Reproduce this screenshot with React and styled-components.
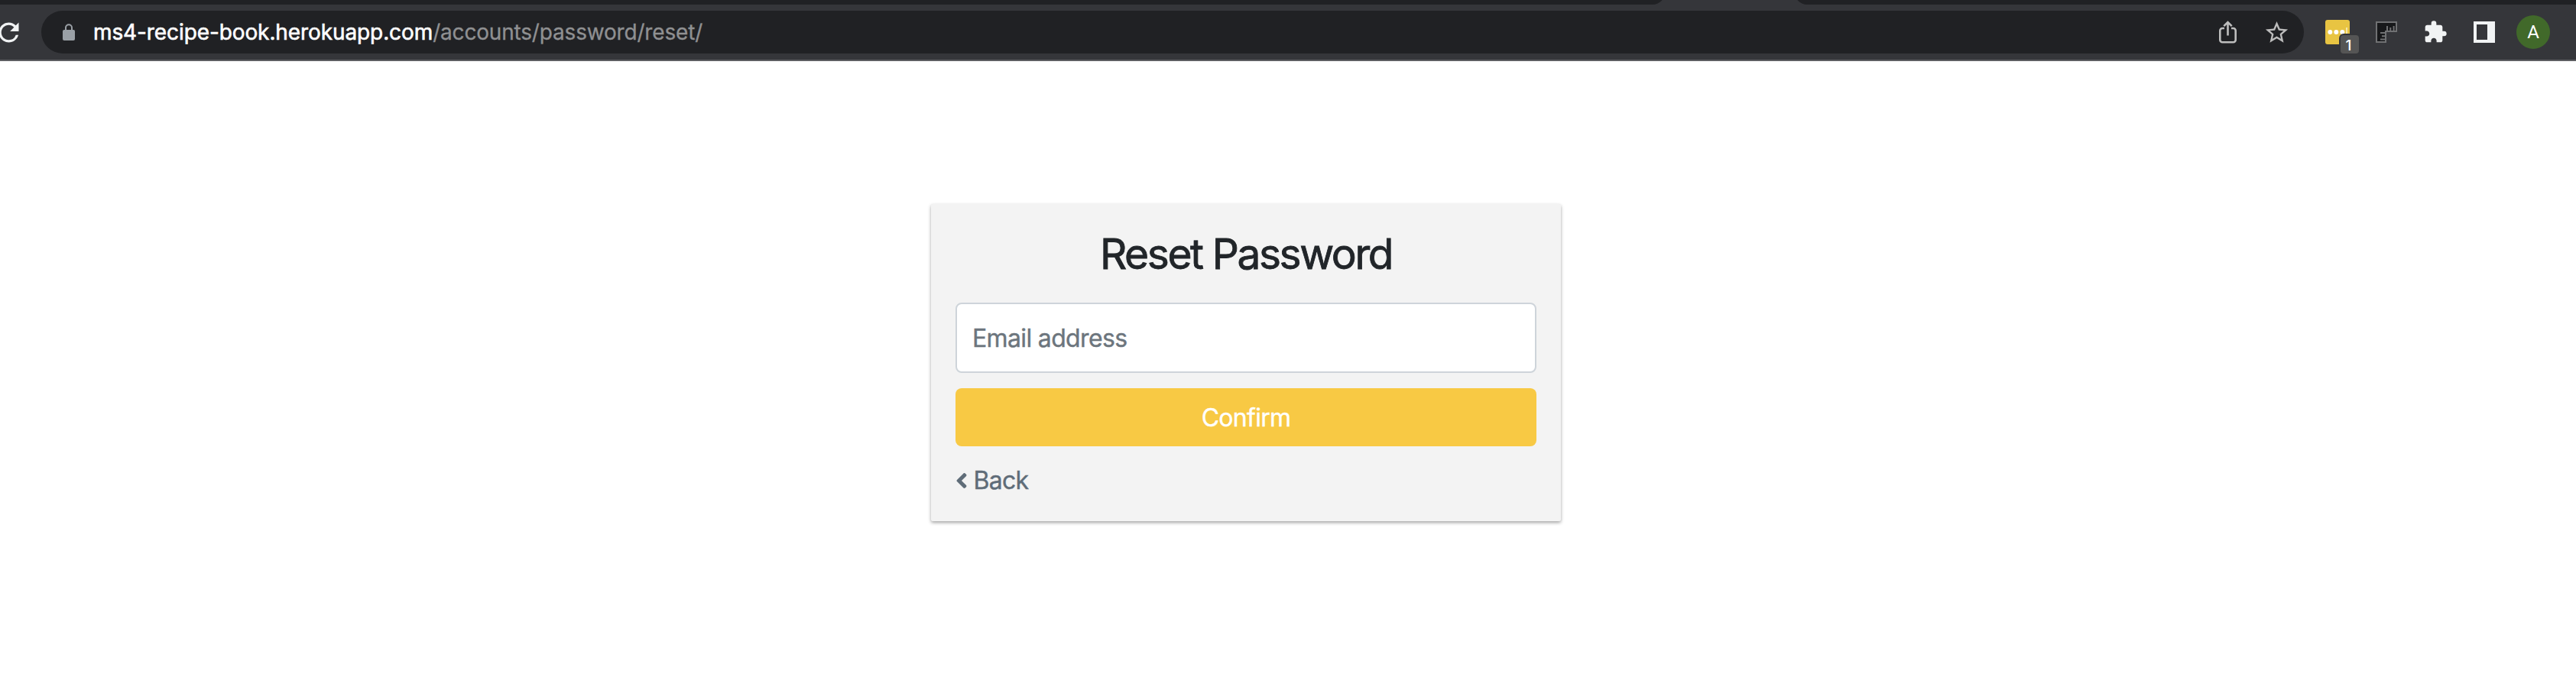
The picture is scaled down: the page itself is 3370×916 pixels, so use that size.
import React from 'react';
import styled, { createGlobalStyle } from 'styled-components';
import { MdExtension, MdRefresh, MdStarBorder } from 'react-icons/md';
import { FaAngleLeft } from 'react-icons/fa';

const GlobalStyle = createGlobalStyle`
  *, *::before, *::after { box-sizing: border-box; }
  body {
    margin: 0;
    background: #fff;
    font-family: Inter, "Liberation Sans", sans-serif;
  }
`;

const Page = styled.div`
  display: flex;
  flex-direction: column;
  min-height: 916px;
  overflow: hidden;
`;

/* Browser chrome */

const TabStrip = styled.div`
  display: flex;
  align-items: flex-end;
  justify-content: space-between;
  height: 6px;
  overflow: hidden;
  background: #35363a;
`;

const TabGap = styled.div`
  flex: none;
  width: ${(p) => p.$width}px;
  height: 20px;
  background: #202124;
  border-radius: ${(p) => (p.$side === 'left' ? '0 0 16px 0' : '0 0 0 16px')};
`;

const Toolbar = styled.header`
  display: flex;
  align-items: center;
  height: 74px;
  padding-right: 34px;
  background: #35363a;
  border-bottom: 2px solid #5d5e62;
  color: #f1f3f4;

  svg {
    display: block;
    flex: none;
  }
`;

const ReloadButton = styled.span`
  margin: 0 23.5px 0 -8.5px;
`;

const AddressBar = styled.div`
  display: flex;
  flex: 1;
  align-items: center;
  height: 56px;
  padding: 0 18.5px 0 28px;
  border-radius: 28px;
  background: #202124;
  color: #bdbdbd;
`;

const Url = styled.div`
  flex: 1;
  margin-left: 24px;
  font-size: 28px;
  line-height: 40px;
  letter-spacing: -0.18px;
  color: #8f9092;
  -webkit-text-stroke: 0.3px currentColor;
`;

const Host = styled.span`
  letter-spacing: -0.1px;
  color: #fff;
  -webkit-text-stroke: 0.6px currentColor;
`;

const AddressActions = styled.div`
  display: flex;
  align-items: center;
  gap: 34.4px;
`;

const Extensions = styled.div`
  display: flex;
  align-items: center;
  margin-left: 28px;
`;

const Extension = styled.div`
  margin-right: ${(p) => p.$gap}px;
`;

const PasswordExtension = styled.div`
  position: relative;
  display: flex;
  width: 32px;
  height: 32px;
  margin-right: 34px;
  border-radius: 3px;
  background: #e8c442;
`;

const Badge = styled.span`
  position: absolute;
  top: 18px;
  left: 18px;
  display: flex;
  align-items: center;
  justify-content: center;
  width: 28px;
  height: 28px;
  border: 2px solid #35363a;
  border-radius: 6px;
  background: #555;
  color: #fff;
  font-size: 19px;
  font-weight: 500;
  line-height: 1;
  padding: 3px 3px 0 0;
`;

const Avatar = styled.div`
  display: flex;
  align-items: center;
  justify-content: center;
  width: 44px;
  height: 44px;
  border-radius: 50%;
  background: #41692a;
  color: #fff;
  font: 400 24px/1 Roboto, sans-serif;
`;

/* Page content */

const Main = styled.main`
  display: flex;
  flex: 1;
  justify-content: center;
  align-items: flex-start;
  padding: 187px 110px 0 0;
`;

const Card = styled.form`
  display: flex;
  flex-direction: column;
  gap: 20px;
  width: 824px;
  padding: 33px 32px 29px;
  background: #f3f3f3;
  border-radius: 2px;
  box-shadow: 0 2px 4px rgba(0, 0, 0, 0.36);
`;

const Title = styled.h1`
  margin: 0 0 12px;
  font-size: 55px;
  font-weight: 400;
  line-height: 64px;
  letter-spacing: -2.4px;
  text-align: center;
  color: #212529;
  -webkit-text-stroke: 0.8px currentColor;
`;

const EmailInput = styled.input`
  height: 92px;
  padding: 0 20px;
  border: 2px solid #ced4da;
  border-radius: 8px;
  background: #fff;
  font: inherit;
  font-size: 32px;
  letter-spacing: -0.65px;

  &::placeholder {
    color: #6c757d;
    opacity: 1;
    -webkit-text-stroke: 0.4px currentColor;
  }
`;

const ConfirmButton = styled.button`
  height: 76px;
  border: 0;
  border-radius: 8px;
  background: #f8c944;
  color: #fff;
  font: inherit;
  font-size: 32px;
  letter-spacing: -0.7px;
  -webkit-text-stroke: 0.4px currentColor;
`;

const BackLink = styled.a`
  display: flex;
  align-items: center;
  gap: 7.5px;
  padding-top: 1px;
  font-size: 32px;
  line-height: 48px;
  letter-spacing: -0.7px;
  color: #5f6c78;
  -webkit-text-stroke: 0.4px currentColor;

  svg {
    width: 16px;
    height: 32px;
  }
`;

const LockIcon = () => (
  <svg width="16" height="22" viewBox="0 0 16 22">
    <rect x="0" y="8" width="16" height="14" rx="2" fill="#9aa0a6" />
    <path d="M4 9V5.2a4 4 0 0 1 8 0V9" fill="none" stroke="#9aa0a6" strokeWidth="2" />
  </svg>
);

const ShareIcon = () => (
  <svg width="23" height="30" viewBox="0 0 23 30" fill="none" stroke="#bdbdbd" strokeWidth="2.6">
    <path d="M7 10H4.3a3 3 0 0 0-3 3v12.2a3 3 0 0 0 3 3h14.4a3 3 0 0 0 3-3V13a3 3 0 0 0-3-3H16" />
    <path d="M11.5 19.5V3M6.3 7.2l5.2-5.2 5.2 5.2" />
  </svg>
);

const DotsIcon = () => (
  <svg width="32" height="32" viewBox="0 0 32 32">
    <g fill="#fff">
      <circle cx="6.3" cy="16" r="3" />
      <circle cx="14.3" cy="16" r="3" />
      <circle cx="22.3" cy="16" r="3" />
    </g>
    <rect x="27" y="10" width="2" height="12" fill="#f5e5a9" />
  </svg>
);

const RulerIcon = () => (
  <svg width="28" height="28" viewBox="0 0 28 28">
    <path d="M1 1H27V13H13V27H1Z" fill="#17181a" stroke="#707173" strokeWidth="2" />
    <path d="M15 12V6M19.3 12V8M23.6 12V6M12 15H6M12 19.3H8M12 23.6H6" stroke="#707173" strokeWidth="2" />
  </svg>
);

const SidePanelIcon = () => (
  <svg width="28" height="28" viewBox="0 0 28 28">
    <path d="M0 0H28V28H0ZM4 4V24H18V4Z" fill="#f1f3f4" fillRule="evenodd" />
  </svg>
);

export default function App() {
  return (
    <>
      <GlobalStyle />
      <Page>
        <TabStrip>
          <TabGap $side="left" $width={2178} />
          <TabGap $side="right" $width={1022} />
        </TabStrip>
        <Toolbar>
          <ReloadButton>
            <MdRefresh size={39} />
          </ReloadButton>
          <AddressBar>
            <LockIcon />
            <Url>
              <Host>ms4-recipe-book.herokuapp.com</Host>/accounts/password/reset/
            </Url>
            <AddressActions>
              <ShareIcon />
              <MdStarBorder size={35} />
            </AddressActions>
          </AddressBar>
          <Extensions>
            <PasswordExtension>
              <DotsIcon />
              <Badge>1</Badge>
            </PasswordExtension>
            <Extension $gap={33.6}>
              <RulerIcon />
            </Extension>
            <Extension $gap={34.4}>
              <MdExtension size={32} />
            </Extension>
            <Extension $gap={28}>
              <SidePanelIcon />
            </Extension>
            <Avatar>A</Avatar>
          </Extensions>
        </Toolbar>
        <Main>
          <Card>
            <Title>Reset Password</Title>
            <EmailInput type="email" placeholder="Email address" />
            <ConfirmButton type="button">Confirm</ConfirmButton>
            <BackLink>
              <FaAngleLeft />
              Back
            </BackLink>
          </Card>
        </Main>
      </Page>
    </>
  );
}
